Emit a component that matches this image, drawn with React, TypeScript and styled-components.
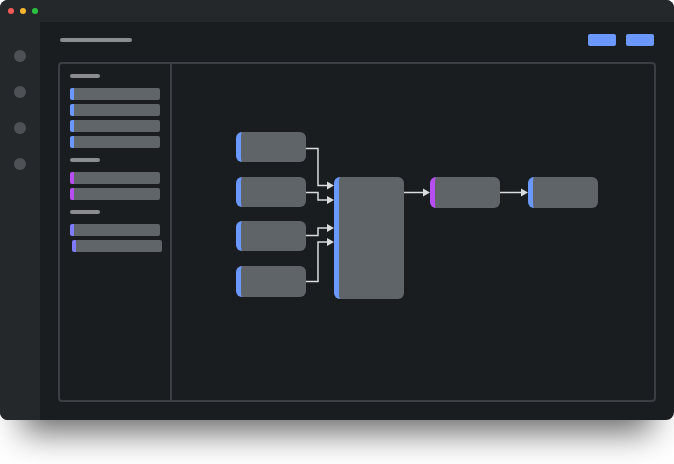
import React from 'react';
import styled, { createGlobalStyle } from 'styled-components';

const GlobalStyle = createGlobalStyle`
  html, body {
    margin: 0;
    padding: 0;
    background: #ffffff;
    font-family: "Inter", "Liberation Sans", sans-serif;
  }
  * { box-sizing: border-box; }
`;

const Page = styled.div`
  width: 674px;
  height: 464px;
  background: #ffffff;
`;

const Window = styled.div`
  width: 674px;
  height: 420px;
  border-radius: 8px;
  overflow: hidden;
  background: #1a1d20;
  display: flex;
  flex-direction: column;
  box-shadow: 0 34px 32px -22px rgba(0, 0, 0, 0.6);
`;

const TitleBar = styled.div`
  height: 22px;
  flex-shrink: 0;
  background: #25282b;
  display: flex;
  align-items: center;
  gap: 6px;
  padding-left: 8px;
`;

const Dot = styled.span<{ $color: string }>`
  width: 6px;
  height: 6px;
  border-radius: 50%;
  background: ${({ $color }) => $color};
`;

const Body = styled.div`
  flex: 1;
  display: flex;
  min-height: 0;
`;

const Sidebar = styled.div`
  width: 40px;
  background: #25282b;
  display: flex;
  flex-direction: column;
  align-items: center;
  gap: 24px;
  padding-top: 28px;
`;

const NavDot = styled.span`
  width: 12px;
  height: 12px;
  border-radius: 50%;
  background: #4e5256;
`;

const Main = styled.div`
  flex: 1;
  display: flex;
  flex-direction: column;
  padding: 12px 18px 18px 18px;
  min-width: 0;
`;

const Header = styled.div`
  height: 12px;
  display: flex;
  align-items: center;
  padding: 0 2px;
  gap: 10px;
`;

const TitleLine = styled.div`
  width: 72px;
  height: 4px;
  border-radius: 2px;
  background: #8b8d90;
  margin-right: auto;
`;

const HeaderButton = styled.div`
  width: 28px;
  height: 12px;
  border-radius: 2px;
  background: #6a98ff;
`;

const Panel = styled.div`
  margin-top: 16px;
  flex: 1;
  border: 2px solid #3b3e42;
  border-radius: 4px;
  display: flex;
  min-height: 0;
`;

const ListColumn = styled.div`
  width: 112px;
  border-right: 2px solid #3b3e42;
  padding: 10px 0 0 10px;
  display: flex;
  flex-direction: column;
  gap: 10px;
`;

const Group = styled.div`
  display: flex;
  flex-direction: column;
  gap: 4px;
`;

const GroupHeading = styled.div`
  width: 30px;
  height: 4px;
  border-radius: 2px;
  background: #8b8d90;
  margin-bottom: 6px;
`;

const ListItem = styled.div<{ $accent: string; $shift?: number }>`
  width: 90px;
  height: 12px;
  border-radius: 2px;
  background: #5f6569;
  border-left: 4px solid ${({ $accent }) => $accent};
  margin-left: ${({ $shift }) => $shift || 0}px;
`;

const Canvas = styled.div`
  position: relative;
  flex: 1;
`;

const Node = styled.div<{ $accent: string }>`
  position: absolute;
  width: 70px;
  border-radius: 6px;
  background: #5f6469;
  border-left: 5px solid ${({ $accent }) => $accent};
`;

const Wires = styled.svg`
  position: absolute;
  inset: 0;
  width: 100%;
  height: 100%;
`;

const BLUE = '#6a98ff';
const PURPLE = '#b64ef2';
const VIOLET = '#7f7bff';

const groups = [
  [BLUE, BLUE, BLUE, BLUE],
  [PURPLE, PURPLE],
  [VIOLET, VIOLET],
];

const nodes = [
  { x: 64, y: 68, h: 30, accent: BLUE },
  { x: 64, y: 113, h: 30, accent: BLUE },
  { x: 64, y: 157, h: 30, accent: BLUE },
  { x: 64, y: 202, h: 31, accent: BLUE },
  { x: 162, y: 113, h: 122, accent: BLUE },
  { x: 258, y: 113, h: 31, accent: PURPLE },
  { x: 356, y: 113, h: 31, accent: BLUE },
];

const wires = [
  { d: 'M134 84.5 H146 V121.5 H156', tipX: 162, tipY: 121.5 },
  { d: 'M134 128.5 H146 V136 H156', tipX: 162, tipY: 136 },
  { d: 'M134 171.5 H146 V164 H156', tipX: 162, tipY: 164 },
  { d: 'M134 217.5 H146 V178 H156', tipX: 162, tipY: 178 },
  { d: 'M232 128.5 H252', tipX: 258, tipY: 128.5 },
  { d: 'M328 128.5 H350', tipX: 356, tipY: 128.5 },
];

const App: React.FC = () => {
  return (
    <>
      <GlobalStyle />
      <Page>
        <Window>
          <TitleBar>
            <Dot $color="#f25a56" />
            <Dot $color="#f7b62e" />
            <Dot $color="#2cc13f" />
          </TitleBar>
          <Body>
            <Sidebar>
              <NavDot />
              <NavDot />
              <NavDot />
              <NavDot />
            </Sidebar>
            <Main>
              <Header>
                <TitleLine />
                <HeaderButton />
                <HeaderButton />
              </Header>
              <Panel>
                <ListColumn>
                  {groups.map((items, gi) => (
                    <Group key={gi}>
                      <GroupHeading />
                      {items.map((accent, i) => (
                        <ListItem
                          key={i}
                          $accent={accent}
                          $shift={gi === 2 && i === 1 ? 2 : 0}
                        />
                      ))}
                    </Group>
                  ))}
                </ListColumn>
                <Canvas>
                  <Wires>
                    {wires.map((w, i) => (
                      <g key={i}>
                        <path d={w.d} fill="none" stroke="#d9dbdd" strokeWidth={1.5} />
                        <polygon
                          points={`${w.tipX},${w.tipY} ${w.tipX - 7},${w.tipY - 4} ${w.tipX - 7},${w.tipY + 4}`}
                          fill="#d9dbdd"
                        />
                      </g>
                    ))}
                  </Wires>
                  {nodes.map((n, i) => (
                    <Node
                      key={i}
                      $accent={n.accent}
                      style={{ left: n.x, top: n.y, height: n.h }}
                    />
                  ))}
                </Canvas>
              </Panel>
            </Main>
          </Body>
        </Window>
      </Page>
    </>
  );
};

export default App;
